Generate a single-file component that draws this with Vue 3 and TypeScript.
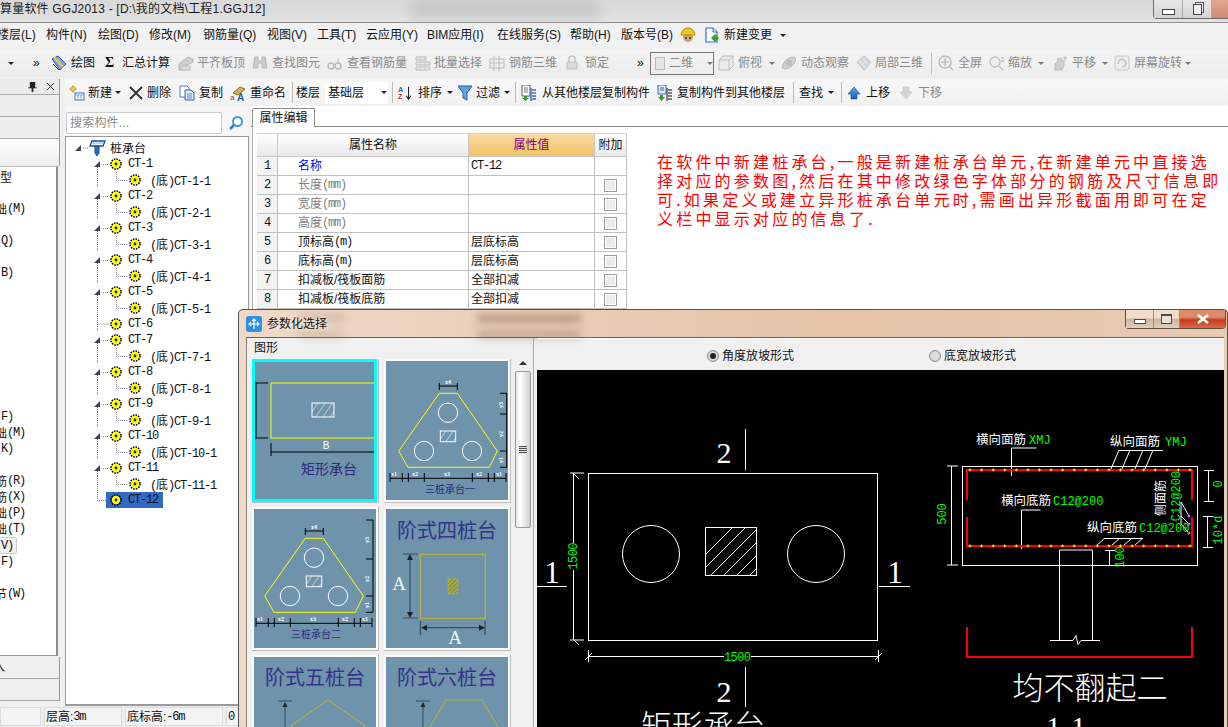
<script setup lang="ts">
type Cell = { x: number; k: string; v: string; g: boolean; w: number }
type Spec = [number, string, string?, number?]
const mk = (s: Spec[]): Cell[] =>
  s.map((c, i) => ({
    x: c[0], k: c[1], v: c[2] ?? '', g: !!c[3],
    w: (i + 1 < s.length ? s[i + 1][0] : c[0] + 60) - c[0],
  }))

const menu = mk([
  [-3, 't', '楼层(L)'], [46, 't', '构件(N)'], [98, 't', '绘图(D)'], [149, 't', '修改(M)'], [203, 't', '钢筋量(Q)'],
  [267, 't', '视图(V)'], [317, 't', '工具(T)'], [366, 't', '云应用(Y)'], [427, 't', 'BIM应用(I)'], [497, 't', '在线服务(S)'],
  [570, 't', '帮助(H)'], [621, 't', '版本号(B)'], [680, 'i', 'helmet'], [704, 'i', 'newdoc'], [724, 't', '新建变更'], [780, 'c'],
])
const bar1 = mk([
  [8, 'c'], [33, 't', '»'], [51, 'i', 'pencil'], [71, 't', '绘图'], [105, 'sum', 'Σ'], [122, 't', '汇总计算'],
  [178, 'i', 'align', 1], [197, 't', '平齐板顶', 1], [252, 'i', 'binoc', 1], [272, 't', '查找图元', 1],
  [327, 'i', 'glasses', 1], [347, 't', '查看钢筋量', 1], [415, 'i', 'batch', 1], [434, 't', '批量选择', 1],
  [489, 'i', 'rebar', 1], [509, 't', '钢筋三维', 1], [564, 'i', 'lock', 1], [585, 't', '锁定', 1], [637, 't', '»'],
  [652, 'combo', '二维'], [718, 'i', 'box', 1], [738, 't', '俯视', 1], [769, 'c', '', 1],
  [781, 'i', 'orbit', 1], [801, 't', '动态观察', 1], [856, 'i', 'local', 1], [875, 't', '局部三维', 1], [931, 's'],
  [938, 'i', 'zoomall', 1], [958, 't', '全屏', 1], [989, 'i', 'zoom', 1], [1008, 't', '缩放', 1], [1038, 'c', '', 1],
  [1052, 'i', 'pan', 1], [1072, 't', '平移', 1], [1102, 'c', '', 1], [1114, 'i', 'rotate', 1], [1134, 't', '屏幕旋转', 1], [1185, 'c', '', 1],
])
const bar2 = mk([
  [69, 'i', 'new'], [88, 't', '新建'], [115, 'c'], [128, 'i', 'del'], [147, 't', '删除'], [179, 'i', 'copy'], [199, 't', '复制'],
  [230, 'i', 'rename'], [250, 't', '重命名'], [292, 's'], [296, 't', '楼层'], [325, 'floor', '基础层'], [392, 's'],
  [397, 'i', 'sort'], [418, 't', '排序'], [447, 'c'], [457, 'i', 'filter'], [476, 't', '过滤'], [504, 'c'], [515, 's'],
  [521, 'i', 'copyfrom'], [542, 't', '从其他楼层复制构件'], [657, 'i', 'copyto'], [677, 't', '复制构件到其他楼层'], [793, 's'],
  [799, 't', '查找'], [828, 'c'], [841, 's'], [846, 'i', 'up'], [866, 't', '上移'], [898, 'i', 'down', 1], [918, 't', '下移', 1],
])

const sideRows: [string, string][] = [
  ['型', ''], ['', ''], ['础', '(M)'], ['', ''], ['', '(Q)'], ['', ''], ['', '(B)'], ['', ''], ['', ''], ['', ''], ['', ''], ['', ''], ['', ''], ['', ''], ['', ''],
  ['', '(F)'], ['础', '(M)'], ['', '(K)'], ['', ''], ['筋', '(R)'], ['筋', '(X)'], ['础', '(P)'], ['础', '(T)'], ['', '(V)'], ['', '(F)'], ['', ''], ['节', '(W)'],
]

type TreeRow = { k: 'root' | 'parent' | 'child' | 'last' | 'leaf'; t: string }
const tree: TreeRow[] = [{ k: 'root', t: '桩承台' }]
for (let i = 1; i <= 11; i++) {
  if (i === 6) { tree.push({ k: 'leaf', t: 'CT-6' }); continue }
  tree.push({ k: 'parent', t: `CT-${i}` })
  tree.push({ k: 'child', t: `CT-${i}-1` })
}
tree.push({ k: 'last', t: 'CT-12' })

const props: { n: string; u?: string; v?: string; c: string; a?: boolean }[] = [
  { n: '名称', v: 'CT-12', c: 'blue' },
  { n: '长度', u: '(mm)', c: 'gray', a: true },
  { n: '宽度', u: '(mm)', c: 'gray', a: true },
  { n: '高度', u: '(mm)', c: 'gray', a: true },
  { n: '顶标高', u: '(m)', v: '层底标高', c: '', a: true },
  { n: '底标高', u: '(m)', v: '层底标高', c: '', a: true },
  { n: '扣减板/筏板面筋', v: '全部扣减', c: '', a: true },
  { n: '扣减板/筏板底筋', v: '全部扣减', c: '', a: true },
  { n: '', c: '', a: false },
]

const dots = Array.from({ length: 20 }, (_, i) => 970 + i * 11.58)
const hatchLines = Array.from({ length: 7 }, (_, i) => -20 + i * 13)
const triLabels: [number, string][] = [[394, 'x1'], [415, 'x2'], [447, 'x3'], [479, 'x2'], [499, 'x1']]
const triTicks = [390, 402.3, 408.3, 424.3, 472.3, 488.3, 494.3, 506]
const tris = [
  { vb: '386 361 122 139', title: '三桩承台一' },
  { vb: '388 364 122 139', title: '三桩承台二' },
]
</script>

<template>
  <div class="app">
    <svg class="defs" aria-hidden="true">
      <defs>
        <pattern id="hatch" width="6" height="6" patternUnits="userSpaceOnUse" patternTransform="rotate(35)">
          <line x1="0" y1="0" x2="0" y2="6" stroke="#fff" stroke-width="1" />
        </pattern>
        <pattern id="hatchY" width="3" height="3" patternUnits="userSpaceOnUse" patternTransform="rotate(45)">
          <line x1="0" y1="0" x2="0" y2="3" stroke="#56603a" stroke-width="1" />
        </pattern>
        <linearGradient id="gBlue" x1="0" y1="0" x2="0" y2="1"><stop offset="0" stop-color="#5aa5e8" /><stop offset="1" stop-color="#1560b0" /></linearGradient>
      </defs>
      <symbol id="gear" viewBox="0 0 12 12">
        <circle cx="6" cy="6" r="5" fill="none" stroke="#000" stroke-width="1.6" stroke-dasharray="1.6 1" />
        <circle cx="6" cy="6" r="4.2" fill="#ff0" />
        <circle cx="6" cy="6" r="1.4" fill="#222" />
      </symbol>
      <symbol id="pile" viewBox="0 0 18 18">
        <path d="M4 2h13l-2 5H2z" fill="#fff" stroke="#1b4f9c" stroke-width="1.3" />
        <path d="M4 4h11" stroke="#7db0e8" />
        <path d="M7 7h4v7l-2 3-2-3z" fill="#2a6fc0" stroke="#1b4f9c" />
      </symbol>
      <symbol id="helmet" viewBox="0 0 16 16">
        <circle cx="8" cy="10" r="5" fill="#caa07c" />
        <path d="M1 8a7 7 0 0 1 14 0z" fill="#f2c51e" stroke="#b98e10" />
        <circle cx="6" cy="11" r="1" fill="#333" /><circle cx="10" cy="11" r="1" fill="#333" />
      </symbol>
      <symbol id="newdoc" viewBox="0 0 16 16">
        <path d="M2 1h7l4 4v10H2z" fill="#fff" stroke="#2c72c7" stroke-width="1.2" />
        <path d="M9 1v4h4" fill="#d8e8fa" stroke="#2c72c7" />
        <path d="M11 7l4 4-4 4-4-4z" fill="#35a435" />
      </symbol>
      <symbol id="pencil" viewBox="0 0 16 16">
        <path d="M1 4l6-3 8 8-6 6z" fill="#7ea6df" stroke="#2f5ca8" />
        <path d="M3 2l9 10" stroke="#f1c64a" stroke-width="2" />
        <path d="M2 9l6 6" stroke="#20408a" />
      </symbol>
      <symbol id="align" viewBox="0 0 16 16">
        <path d="M1 15V9l9-7 5 2v3l-8 4v4z" fill="#cfcfcf" stroke="#b3b3b3" /><path d="M3 11h9v4H3z" fill="#dcdcdc" stroke="#b9b9b9" />
      </symbol>
      <symbol id="binoc" viewBox="0 0 16 16">
        <path d="M3 2h3v4h4V2h3l2 11h-5V8H6v5H1z" fill="#cdcdcd" stroke="#b5b5b5" />
      </symbol>
      <symbol id="glasses" viewBox="0 0 16 16">
        <circle cx="4" cy="11" r="3" fill="none" stroke="#b5b5b5" stroke-width="1.3" /><circle cx="11" cy="11" r="3" fill="none" stroke="#b5b5b5" stroke-width="1.3" /><path d="M11 3v5M7 11h1" stroke="#c0c0c0" />
      </symbol>
      <symbol id="batch" viewBox="0 0 16 16">
        <path d="M1 2h10v3H1zM1 7h14v3H1zM1 12h14v3H1z" fill="#e8e8e8" stroke="#bbb" /><path d="M5 2v13M10 2v13" stroke="#ccc" />
      </symbol>
      <symbol id="rebar" viewBox="0 0 16 16">
        <path d="M1 4h14v9H1zM5 1v15M10 1v15M1 8h14" fill="none" stroke="#bdbdbd" />
      </symbol>
      <symbol id="lock" viewBox="0 0 16 16">
        <path d="M5 7V4a3 3 0 0 1 6 0v3" fill="none" stroke="#c2c2c2" stroke-width="1.5" /><rect x="3" y="7" width="10" height="7" rx="1" fill="#dcdcdc" stroke="#bcbcbc" />
      </symbol>
      <symbol id="box" viewBox="0 0 16 16">
        <path d="M1 5l4-4h10v10l-4 4H1zM1 5h10v10M11 5l4-4" fill="#ececec" stroke="#bcbcbc" />
      </symbol>
      <symbol id="orbit" viewBox="0 0 16 16">
        <ellipse cx="8" cy="8" rx="8" ry="4" transform="rotate(-40 8 8)" fill="#d0d0d0" stroke="#bdbdbd" /><circle cx="8" cy="8" r="3" fill="#bdbdbd" />
      </symbol>
      <symbol id="local" viewBox="0 0 16 16">
        <path d="M1 7l7-6 7 6-7 8z" fill="#e2e2e2" stroke="#bcbcbc" /><path d="M5 4l6 8M9 2l4 6M3 8l5 6" stroke="#c4c4c4" />
      </symbol>
      <symbol id="zoomall" viewBox="0 0 16 16">
        <circle cx="7" cy="7" r="6" fill="#eee" stroke="#bdbdbd" stroke-width="1.4" /><path d="M7 3v8M3 7h8M12 12l3 3" stroke="#b5b5b5" stroke-width="1.2" />
      </symbol>
      <symbol id="zoom" viewBox="0 0 16 16">
        <circle cx="6" cy="7" r="5" fill="#eee" stroke="#c2c2c2" stroke-width="1.4" /><path d="M10 11l4 4M12 3h3M12 6h3" stroke="#bdbdbd" stroke-width="1.3" />
      </symbol>
      <symbol id="pan" viewBox="0 0 16 16">
        <path d="M3 15V9l2-2 1-4 2 1 1-1 1 2 2 1v4l-2 5z" fill="#cfcfcf" stroke="#bdbdbd" /><path d="M13 1v5M11 3h4" stroke="#bdbdbd" />
      </symbol>
      <symbol id="rotate" viewBox="0 0 16 16">
        <rect x="1" y="1" width="14" height="14" rx="2" fill="#eee" stroke="#c6c6c6" /><path d="M4 9a4 4 0 1 1 7 2M11 11l-3 1" fill="none" stroke="#b8b8b8" stroke-width="1.3" />
      </symbol>
      <symbol id="new" viewBox="0 0 16 16">
        <path d="M3 1h2v2h2v2H5v2H3V5H1V3h2z" fill="#f4d24a" stroke="#ae8d18" stroke-width=".6" /><rect x="6" y="8" width="9" height="7" fill="#fff" stroke="#3a74bd" /><path d="M6 10h9M9 10v5M12 10v5" stroke="#7aa5da" />
      </symbol>
      <symbol id="del" viewBox="0 0 16 16">
        <path d="M2 2l12 12M14 2L2 14" stroke="#333" stroke-width="2" />
      </symbol>
      <symbol id="copy" viewBox="0 0 16 16">
        <path d="M1 1h7l2 2v9H1z" fill="#fff" stroke="#4c7bb8" /><path d="M6 5h6l3 3v7H6z" fill="#dbe8f7" stroke="#3566a8" /><path d="M8 9h5M8 11h5M8 13h5" stroke="#6b8fbf" />
      </symbol>
      <symbol id="rename" viewBox="0 0 16 16">
        <path d="M3 8l7-6 5 2-7 6z" fill="#d6b04d" stroke="#8f7420" /><text x="0" y="15" font-size="8" fill="#555" font-family="Liberation Sans">a</text><text x="7" y="16" font-size="10" font-weight="700" fill="#2c5fae" font-family="Liberation Sans">A</text>
      </symbol>
      <symbol id="sort" viewBox="0 0 18 16">
        <text x="1" y="7" font-size="8" font-weight="700" fill="#2b63b4" font-family="Liberation Sans">A</text><text x="1" y="15" font-size="8" font-weight="700" fill="#b03030" font-family="Liberation Sans">Z</text><path d="M13 1v13M10.500 11l2.500 4 2.500-4" fill="none" stroke="#222" stroke-width="1.2" />
      </symbol>
      <symbol id="filter" viewBox="0 0 16 16">
        <path d="M1 1h14L10 8v7l-4-2V8z" fill="#5ea3e6" stroke="#245ea8" />
      </symbol>
      <symbol id="copyfrom" viewBox="0 0 16 16">
        <path d="M1 0h8v11H1z" fill="#fff" stroke="#555" /><path d="M3 3h4M3 5h4M3 7h4" stroke="#777" /><path d="M3 11h3v2h2l-3.500 3L1 13h2z" fill="#2aa02a" /><path d="M11 5h4M11 8h4M11 11h4M11 14h4M10 3v13" stroke="#3a6db0" stroke-width="1.4" />
      </symbol>
      <symbol id="copyto" viewBox="0 0 16 16">
        <path d="M1 0h8v9H1z" fill="#dbe8f7" stroke="#3a6db0" /><path d="M3 3h4M3 5h4" stroke="#3a6db0" /><path d="M3 10h3v2h2l-3.500 4L1 12h2z" fill="#2aa02a" /><path d="M11 5h4M11 8h4M11 11h4M11 14h4M10 3v13" stroke="#555" stroke-width="1.4" />
      </symbol>
      <symbol id="up" viewBox="0 0 16 16">
        <path d="M8 2l6 7h-3v5H5V9H2z" fill="url(#gBlue)" stroke="#1c5199" stroke-width=".6" />
      </symbol>
      <symbol id="down" viewBox="0 0 16 16">
        <path d="M8 14l6-7h-3V2H5v5H2z" fill="#d4d4d4" stroke="#bdbdbd" stroke-width=".6" />
      </symbol>
    </svg>

    <header class="titlebar">
      <span class="title">算量软件 GGJ2013 - [D:\我的文档\工程1.GGJ12]</span>
      <span class="title-blur"></span>
      <div class="winbtns">
        <span class="wb"><i class="min"></i></span>
        <span class="wb"><i class="restore"></i></span>
        <span class="wb close"></span>
      </div>
    </header>

    <nav class="row menu">
      <template v-for="c in menu" :key="c.x">
        <span class="cell" :style="{ width: c.w + 'px' }">
          <svg v-if="c.k === 'i'" class="ic"><use :href="'#' + c.v" /></svg>
          <i v-else-if="c.k === 'c'" class="caret"></i>
          <template v-else>{{ c.v }}</template>
        </span>
      </template>
    </nav>

    <div class="row bar1">
      <span class="cell" v-for="c in bar1" :key="c.x" :class="{ gray: c.g }" :style="{ width: c.w + 'px' }">
        <svg v-if="c.k === 'i'" class="ic"><use :href="'#' + c.v" /></svg>
        <i v-else-if="c.k === 'c'" class="caret"></i>
        <i v-else-if="c.k === 's'" class="sep"></i>
        <b v-else-if="c.k === 'sum'" class="sum">{{ c.v }}</b>
        <span v-else-if="c.k === 'combo'" class="combo"><i class="swatch"></i>{{ c.v }}<i class="caret"></i></span>
        <template v-else>{{ c.v }}</template>
      </span>
    </div>

    <div class="main">
      <aside class="side">
        <div class="dock-head">
          <svg class="pin" viewBox="0 0 10 12"><path d="M2 1h6v6h2v1H6v4H4V8H0V7h2z" fill="#222" /></svg>
          <svg class="pin-x" viewBox="0 0 10 10"><path d="M1 1l8 8M9 1L1 9" stroke="#222" /></svg>
        </div>
        <div class="dock-tab"></div>
        <div class="dock-tab"></div>
        <div class="dock-grad"></div>
        <div class="side-list">
          <div v-for="(r, i) in sideRows" :key="i" class="side-row" :class="{ first: i === 0, hl: i === 23 }">
            <span class="cjk">{{ r[0] }}</span><span class="mono">{{ r[1] }}</span>
          </div>
        </div>
        <div class="dock-foot"><span>入</span></div>
        <div class="dock-foot"></div>
      </aside>

      <div class="work">
        <div class="row bar2">
          <span class="cell" v-for="c in bar2" :key="c.x" :class="{ gray: c.g }" :style="{ width: c.w + 'px' }">
            <svg v-if="c.k === 'i'" class="ic"><use :href="'#' + c.v" /></svg>
            <i v-else-if="c.k === 'c'" class="caret"></i>
            <i v-else-if="c.k === 's'" class="sep"></i>
            <span v-else-if="c.k === 'floor'" class="floor">{{ c.v }}<i class="caret"></i></span>
            <template v-else>{{ c.v }}</template>
          </span>
        </div>
        <div class="panes">
          <section class="treecol">
            <div class="searchrow">
              <div class="search">搜索构件...</div>
              <svg class="mag" viewBox="0 0 16 16"><circle cx="9.500" cy="6.500" r="4.500" fill="#fff" stroke="#3a9ae0" stroke-width="2" /><path d="M6 10l-4 4" stroke="#2c7fc4" stroke-width="2.500" /></svg>
            </div>
            <div class="tree">
              <div v-for="(r, i) in tree" :key="i" class="tr">
                <template v-if="r.k === 'root'">
                  <svg class="wire" width="44" height="16" viewBox="66 0 44 16">
                    <path d="M81 5v6h-6z" fill="#444" />
                    <path d="M83 8h5" fill="none" stroke="#777" stroke-dasharray="1 1" />
                    <use href="#pile" x="88" y="-1" width="18" height="18" />
                  </svg>
                  <span class="cjk">{{ r.t }}</span>
                </template>
                <template v-else-if="r.k === 'parent' || r.k === 'leaf'">
                  <svg class="wire" width="62" height="16" viewBox="66 0 62 16">
                    <path v-if="r.k === 'parent'" d="M100 5v6h-6z" fill="#444" />
                    <path v-if="r.k === 'parent'" d="M97.500 11v5" fill="none" stroke="#777" stroke-dasharray="1 1" />
                    <path v-else d="M97.500 0v16M97.500 8h12" fill="none" stroke="#777" stroke-dasharray="1 1" />
                    <path v-if="r.k === 'parent'" d="M103 8.500h6" fill="none" stroke="#777" stroke-dasharray="1 1" />
                    <use href="#gear" x="110" y="2" width="12" height="12" />
                  </svg>
                  <span class="mono">{{ r.t }}</span>
                </template>
                <template v-else-if="r.k === 'child'">
                  <svg class="wire" width="84" height="16" viewBox="66 0 84 16">
                    <path d="M97.500 0v16M116.500 0v8.500h11" fill="none" stroke="#777" stroke-dasharray="1 1" />
                    <use href="#gear" x="129" y="2" width="12" height="12" />
                  </svg>
                  <span class="mono">(<em>底</em>){{ r.t }}</span>
                </template>
                <template v-else>
                  <svg class="wire" width="40" height="16" viewBox="66 0 40 16">
                    <path d="M97.500 0v8.500h9" fill="none" stroke="#777" stroke-dasharray="1 1" />
                  </svg>
                  <span class="sel">
                    <svg class="wire" width="22" height="16" viewBox="106 0 22 16"><use href="#gear" x="110" y="2" width="12" height="12" /></svg>
                    <span class="mono">{{ r.t }}</span>
                  </span>
                </template>
              </div>
            </div>
          </section>

          <section class="props">
            <div class="tabstrip"><span class="tab">属性编辑</span></div>
            <div class="tabbody">
              <div class="table">
                <div class="tr-h">
                  <span></span><span>属性名称</span><span class="active">属性值</span><span>附加</span>
                </div>
                <div v-for="(p, i) in props" :key="i" class="tr-b">
                  <span class="num mono">{{ i + 1 }}</span>
                  <span class="name" :class="p.c">{{ p.n }}<span v-if="p.u" class="mono unit">{{ p.u }}</span></span>
                  <span class="val" :class="{ mono: p.v === 'CT-12' }">{{ p.v }}</span>
                  <span class="chk"><i v-if="p.a"></i></span>
                </div>
              </div>
              <p class="note">在软件中新建桩承台,一般是新建桩承台单元,在新建单元中直接选<br />择对应的参数图,然后在其中修改绿色字体部分的钢筋及尺寸信息即<br />可.如果定义或建立异形桩承台单元时,需画出异形截面用即可在定<br />义栏中显示对应的信息了.</p>
            </div>
          </section>
        </div>
      </div>
    </div>

    <footer class="status">
      <span class="st s0"></span>
      <span class="st s1">层高:<span class="mono">3m</span></span>
      <span class="st s2">底标高:<span class="mono">-6m</span></span>
      <span class="st s3 mono">0</span>
    </footer>

    <section class="dialog">
      <div class="dlg-title">
        <i class="blot b1"></i><i class="blot b2"></i><i class="blot b3"></i><i class="blot b4"></i>
        <svg class="dlg-icon" viewBox="0 0 16 16"><rect width="16" height="16" rx="3" fill="#2a8fe6" /><path d="M8 3v10M3 8h10M5 6L3 8l2 2M11 6l2 2-2 2M6 5l2-2 2 2" fill="none" stroke="#fff" stroke-width="1.200" /></svg>
        <span class="dlg-name">参数化选择</span>
        <div class="dlg-btns">
          <span class="db"><i class="dmin"></i></span>
          <span class="db"><i class="dmax"></i></span>
          <span class="db dclose"><svg viewBox="0 0 14 10" width="14" height="10"><path d="M2 1l10 8M12 1L2 9" stroke="#fff" stroke-width="2.600" /></svg></span>
        </div>
      </div>
      <div class="dlg-body">
        <div class="gal-pane">
          <div class="grp-label">图形</div>
          <div class="gal-wrap">
            <div class="gallery">
              <div class="thumb selected">
                <svg viewBox="253 359 125 143" width="125" height="143">
                  <rect x="253" y="359" width="125" height="143" fill="#6f93aa" />
                  <path d="M378 383H272v55h106" fill="none" stroke="#ffff00" />
                  <rect x="313" y="403" width="22" height="14" fill="url(#hatch)" stroke="#fff" />
                  <path d="M257 383v55M255 383h14M255 438h14M272 443v13M272 452h106" stroke="#000" fill="none" />
                  <text x="327" y="449" class="tb" font-size="10" fill="#fff" text-anchor="middle">B</text>
                  <text x="330" y="474" class="tc" font-size="14" fill="#2c2c7c" text-anchor="middle">矩形承台</text>
                  <rect x="254.500" y="360.500" width="122" height="140" fill="none" stroke="#00ffff" stroke-width="3" />
                </svg>
              </div>
              <div class="thumb" v-if="tris[0]">
                <svg :viewBox="tris[0].vb" width="122" height="139">
                  <rect x="380" y="355" width="140" height="150" fill="#6f93aa" />
                  <path d="M439.300 393.300h18L497.300 451l-8 16.300H408l-9.300-16.300z" fill="none" stroke="#ffff00" />
                  <circle cx="448" cy="412.700" r="9.700" fill="none" stroke="#fff" />
                  <circle cx="424" cy="451" r="9.700" fill="none" stroke="#fff" />
                  <circle cx="472" cy="451" r="9.700" fill="none" stroke="#fff" />
                  <rect x="440.300" y="431" width="15.400" height="10.700" fill="url(#hatch)" stroke="#fff" />
                  <path d="M439.300 386h18M439.300 383v7M457.300 383v7M506.700 393.300v74M500 393.300h7M500 414h7M500 451h7M500 467.300h7M390 478.300h116" stroke="#000" fill="none" />
                  <path v-for="t in triTicks" :key="t" :d="`M${t} 473v9`" stroke="#000" />
                  <text x="448" y="384" class="tiny" text-anchor="middle">x4</text>
                  <text v-for="(l, i) in triLabels" :key="i" :x="l[0]" :y="476" class="tiny" text-anchor="middle">{{ l[1] }}</text>
                  <text class="tiny" text-anchor="middle" transform="translate(503 405) rotate(-90)">y3</text>
                  <text class="tiny" text-anchor="middle" transform="translate(503 434) rotate(-90)">y2</text>
                  <text class="tiny" text-anchor="middle" transform="translate(503 460) rotate(-90)">y1</text>
                  <text x="450" y="493" class="tc" font-size="10" fill="#2c2c7c" text-anchor="middle">{{ tris[0].title }}</text>
                </svg>
              </div>
              <div class="thumb">
                <svg :viewBox="tris[1].vb" width="122" height="139">
                  <rect x="380" y="355" width="140" height="150" fill="#6f93aa" />
                  <path d="M439.300 393.300h18L497.300 451l-8 16.300H408l-9.300-16.300z" fill="none" stroke="#ffff00" />
                  <circle cx="448" cy="412.700" r="9.700" fill="none" stroke="#fff" />
                  <circle cx="424" cy="451" r="9.700" fill="none" stroke="#fff" />
                  <circle cx="472" cy="451" r="9.700" fill="none" stroke="#fff" />
                  <rect x="440.300" y="431" width="15.400" height="10.700" fill="url(#hatch)" stroke="#fff" />
                  <path d="M439.300 386h18M439.300 383v7M457.300 383v7M507 375v92M500 375h7M500 414h7M500 451h7M500 467.300h7M390 478.300h116" stroke="#000" fill="none" />
                  <path v-for="t in triTicks" :key="t" :d="`M${t} 473v9`" stroke="#000" />
                  <text x="448" y="384" class="tiny" text-anchor="middle">x4</text>
                  <text v-for="(l, i) in triLabels" :key="i" :x="l[0]" :y="476" class="tiny" text-anchor="middle">{{ l[1] }}</text>
                  <text class="tiny" text-anchor="middle" transform="translate(503 395) rotate(-90)">y3</text>
                  <text class="tiny" text-anchor="middle" transform="translate(503 434) rotate(-90)">y2</text>
                  <text class="tiny" text-anchor="middle" transform="translate(503 460) rotate(-90)">y1</text>
                  <text x="450" y="493" class="tc" font-size="10" fill="#2c2c7c" text-anchor="middle">{{ tris[1].title }}</text>
                </svg>
              </div>
              <div class="thumb">
                <svg viewBox="386 509 122 139" width="122" height="139">
                  <rect x="386" y="509" width="122" height="139" fill="#6f93aa" />
                  <text x="447" y="538" class="tc" font-size="20" fill="#34348a" text-anchor="middle">阶式四桩台</text>
                  <rect x="420.300" y="554.300" width="65" height="64" fill="none" stroke="#b5b53a" stroke-width="1.200" />
                  <rect x="448.300" y="579" width="9.400" height="14.700" fill="#a9a94c" stroke="#b5b53a" />
                  <rect x="448.300" y="579" width="9.400" height="14.700" fill="url(#hatchY)" />
                  <path d="M403 554h15M403 618h15M410 558v56M420.300 621v14M485 621v14M424 627.700h58" stroke="#35505f" stroke-width="1.200" fill="none" />
                  <path d="M410 554l-3 6h6zM410 618l-3-6h6zM421 627.700l6-3v6zM485 627.700l-6-3v6z" fill="#222" />
                  <text x="399" y="590" class="ts" font-size="19" fill="#eef2f4" text-anchor="middle">A</text>
                  <text x="455" y="644" class="ts" font-size="19" fill="#eef2f4" text-anchor="middle">A</text>
                </svg>
              </div>
              <div class="thumb">
                <svg viewBox="255 657 122 139" width="122" height="139">
                  <rect x="255" y="657" width="122" height="139" fill="#6f93aa" />
                  <text x="316" y="685" class="tc" font-size="20" fill="#34348a" text-anchor="middle">阶式五桩台</text>
                  <path d="M293 725l36-25 36 25v40H293z" fill="none" stroke="#b5b53a" />
                  <path d="M279 701h14M286 703v40" stroke="#35505f" /><path d="M286 702l-2.500 5h5z" fill="#222" />
                </svg>
              </div>
              <div class="thumb">
                <svg viewBox="386 657 122 139" width="122" height="139">
                  <rect x="386" y="657" width="122" height="139" fill="#6f93aa" />
                  <text x="447" y="685" class="tc" font-size="20" fill="#34348a" text-anchor="middle">阶式六桩台</text>
                  <path d="M446 700h36l16 27v40H430v-40z" fill="none" stroke="#b5b53a" />
                  <path d="M416 701h14M423 703v40" stroke="#35505f" /><path d="M423 702l-2.500 5h5z" fill="#222" />
                </svg>
              </div>
            </div>
            <div class="vscroll">
              <i class="up-arrow"></i>
              <div class="vthumb"><i></i></div>
            </div>
          </div>
        </div>
        <div class="cad-pane">
          <div class="radios">
            <label class="radio"><i class="r on"></i>角度放坡形式</label>
            <label class="radio"><i class="r"></i>底宽放坡形式</label>
          </div>
          <svg class="cad" viewBox="537 370 687 357" width="687" height="357">
            <clipPath id="hclip"><rect x="705" y="527" width="52" height="48" /></clipPath>
            <g fill="none" stroke="#fff">
              <rect x="588.500" y="473.500" width="289" height="167" />
              <circle cx="651" cy="554" r="28.500" />
              <circle cx="816" cy="554" r="28.500" />
              <rect x="705.500" y="527.500" width="51" height="48" />
              <g clip-path="url(#hclip)"><line v-for="h in hatchLines" :key="h" :x1="705 + h" y1="575" :x2="705 + h + 48" y2="527" /></g>
              <path d="M745.500 429v41M745.500 667v40M537 586.500h30M879 586.500h31" />
              <path d="M573.500 473v70M573.500 570v70M570 473h14M570 640h14M579 479l-6-6M579 645l-6-6" />
              <path d="M588 656.500h136M751 656.500h127M588.500 650v12M878.500 650v12M585 660l7-7M875 660l7-7" />
              <rect x="962.500" y="466.500" width="235" height="99" />
              <path d="M951.500 466v99M947 466h11M947 565h11" />
              <path d="M1059.500 565v-15h33v90M1059.500 565v75M1050 640.500h23l3-5 2 9 3-4h19" />
              <path d="M1208.500 470v31M1204 470.500h10M1204 501.500h10M1207.500 516v31M1203 516.500h10M1203 547.500h10" />
              <path d="M1109.500 550v15M1105 550.500h10" />
              <path d="M1011.500 476v-28h25M1021.500 549v-39h19" />
              <path d="M1119 450.500h44M1119 450l-8 19M1130 450l-8 19M1143 450l-8 19M1153 450l-8 19" />
              <path d="M1105 538.500h38M1105 538l-8 7M1120 538l-8 7M1132 538l-8 7M1143 538l-8 7" />
              <path d="M1181 502l8 14M1181 502v14l8 8M1181 516v8l8 9" />
            </g>
            <g stroke="#ff0000" stroke-width="2" fill="none">
              <path d="M967 500v-30h225v30M967 517v29h225v-29" />
              <path d="M967 627v30h225v-30" />
            </g>
            <g fill="none">
              <path v-for="d in dots" :key="d" :d="`M${d - 1.5} 470h3M${d} 468.500v3M${d - 1.5} 546h3M${d} 544.500v3`" stroke="#ffff00" />
            </g>
            <g fill="#ff40ff"><circle cx="1189" cy="516" r="1.500" /><circle cx="1189" cy="524" r="1.500" /><circle cx="1189" cy="533" r="1.500" /></g>

            <g class="ts" fill="#fff" font-size="30" text-anchor="middle">
              <text x="724" y="463">2</text><text x="724" y="702">2</text>
              <text x="552" y="583" font-size="31">1</text><text x="895" y="583" font-size="31">1</text>
              <text x="1066" y="737">1-1</text>
            </g>
            <g class="tc" fill="#fff" font-size="31" text-anchor="middle">
              <text x="703" y="737" font-weight="300">矩形承台</text>
              <text x="1090" y="699" font-weight="300">均不翻起二</text>
            </g>
            <g class="tc" fill="#fff" font-size="12.500">
              <text x="976" y="444">横向面筋</text><text x="1110" y="446">纵向面筋</text>
              <text x="1001" y="505">横向底筋</text><text x="1087" y="532">纵向底筋</text>
              <text text-anchor="middle" transform="translate(1165 498) rotate(-90)" font-size="12">侧面筋</text>
            </g>
            <g class="tm" fill="#00ff00" font-size="12">
              <text x="737.500" y="661" text-anchor="middle" textLength="27">1500</text>
              <text text-anchor="middle" transform="translate(577 556) rotate(-90)" textLength="27">1500</text>
              <text x="1029" y="444">XMJ</text><text x="1165" y="446">YMJ</text>
              <text x="1053" y="505">C12@200</text><text x="1139" y="532">C12@200</text>
              <text text-anchor="middle" transform="translate(1180 496) rotate(-90)">C12@200</text>
              <text text-anchor="middle" transform="translate(946 514) rotate(-90)">500</text>
              <text text-anchor="middle" transform="translate(1222 484) rotate(-90)">0</text>
              <text text-anchor="middle" transform="translate(1222 530) rotate(-90)">10*d</text>
              <text text-anchor="middle" transform="translate(1124 557) rotate(-90)">100</text>
            </g>
          </svg>
        </div>
      </div>
    </section>
  </div>
</template>

<style>
html, body { margin: 0; padding: 0; overflow: hidden; background: #f0f0f0; }
</style>

<style scoped>
.app { position: relative; width: 1228px; height: 727px; overflow: hidden; background: #f0f0f0; display: flex; flex-direction: column; font: 12px/16px "Liberation Sans", "Noto Sans CJK SC", sans-serif; color: #111; }
.defs { position: absolute; width: 0; height: 0; }
.cjk { font-family: "Noto Sans CJK SC", sans-serif; font-size: 12px; }
.mono { font-family: "Liberation Mono", "Noto Sans CJK SC", monospace; font-size: 12px; letter-spacing: -1.2px; }
.mono em { font: normal 12px "Noto Sans CJK SC", sans-serif; letter-spacing: 0; }
.row { display: flex; align-items: center; white-space: nowrap; }
.cell { flex: none; display: flex; align-items: center; height: 100%; white-space: nowrap; }
.gray { color: #8a8a8a; }
.ic { width: 16px; height: 16px; flex: none; }
.sep { display: block; width: 1px; height: 21px; background: #bdbdbd; }
.caret { display: block; width: 0; height: 0; border: 3px solid transparent; border-top: 3px solid #222; border-bottom: 0; margin-left: 0; }
.gray .caret { border-top-color: #777; }
.sum { font: 700 14px "Liberation Serif", serif; }

.titlebar { height: 22px; flex: none; display: flex; align-items: center; position: relative; background: linear-gradient(#d8d9d9, #e1e1e1); border-bottom: 1px solid #8d8d8d; }
.title { font-size: 12px; margin-top: -5px; color: #1a1a1a; letter-spacing: .2px; position: relative; z-index: 1; }
.title-blur { position: absolute; left: 410px; top: 1px; width: 190px; height: 16px; background: #bfc1c2; filter: blur(6px); opacity: .8; }
.winbtns { position: absolute; right: 0; top: 0; height: 18px; display: flex; border: 1px solid #6d6d6d; border-top: 0; border-right: 0; border-radius: 0 0 0 4px; margin-left: auto; }
.wb { width: 28px; height: 18px; display: flex; align-items: center; justify-content: center; background: linear-gradient(#e8e8e8, #d2d2d2); border-right: 1px solid #aaa; }
.wb.close { width: 16px; background: linear-gradient(#e2a890, #d08a70); border: 0; }
.min { display: block; width: 11px; height: 4px; border: 1px solid #444; background: #fff; margin-top: 5px; }
.restore { display: block; width: 7px; height: 9px; border: 1px solid #444; background: #eee; box-shadow: 2px -2px 0 -1px #eee, 2px -2px 0 0 #555; }

.menu { height: 24px; flex: none; background: #f1f1f1; margin-left: -3px; }
.bar1 { height: 28px; flex: none; background: linear-gradient(#f4f4f4, #ececec); margin: 2px 0; padding-left: 8px; }
.combo { display: flex; align-items: center; width: 60px; height: 21px; border: 1px solid #777; color: #8a8a8a; gap: 4px; box-sizing: content-box; padding-left: 2px; margin-left: -2px; }
.swatch { display: block; width: 14px; height: 11px; background: #e5e5e5; border: 1px solid #bbb; margin-left: 2px; }
.combo .caret { margin-left: 10px; border-top-color: #777; }

.main { flex: 1; display: flex; min-height: 0; }
.side { width: 65px; flex: none; display: flex; flex-direction: column; }
.dock-head { height: 15px; width: 59px; display: flex; align-items: center; position: relative; background: #ebebeb; border-bottom: 1px solid #aaa; border-right: 1px solid #999; }
.pin { width: 9px; height: 11px; margin-left: 28px; }
.pin-x { width: 9px; height: 9px; margin-left: 9px; }
.dock-tab { height: 21px; width: 59px; background: #eee; border-bottom: 1px solid #aaa; border-right: 1px solid #999; }
.dock-grad { height: 27px; width: 59px; background: linear-gradient(#fff, #ededed); border-right: 1px solid #999; }
.side-list { width: 58px; height: 490px; padding-top: 2px; background: #fff; border-right: 2px solid #8c8c8c; border-bottom: 1px solid #999; border-top: 1px solid #bbb; box-sizing: border-box; overflow: hidden; margin-bottom: 1px; }
.side-row { height: 16px; display: flex; align-items: center; margin-left: -5px; white-space: nowrap; }
.side-row.first { margin-left: 0; }
.side-row.hl { width: 21px; background: #f0f0f0; border: 1px solid #ccc; border-left: 0; border-radius: 0 2px 2px 0; height: 15px; }
.dock-foot { height: 21px; width: 59px; background: #efefef; border-bottom: 1px solid #aaa; border-right: 1px solid #999; overflow: hidden; }
.dock-foot span { margin-left: -7px; display: block; line-height: 20px; }

.work { flex: 1; min-width: 0; display: flex; flex-direction: column; }
.bar2 { height: 27px; flex: none; background: linear-gradient(#f8f8f8, #f1f1f1); padding-left: 4px; }
.floor { display: flex; align-items: center; width: 60px; height: 22px; background: #fff; padding-left: 3px; box-sizing: content-box; }
.floor .caret { margin-left: 17px; }
.panes { flex: 1; display: flex; min-height: 0; }
.treecol { width: 184px; flex: none; display: flex; flex-direction: column; background: #f6f6f6; }
.searchrow { height: 30px; flex: none; display: flex; align-items: center; padding-top: 3px; box-sizing: border-box; }
.search { width: 156px; height: 22px; margin-left: 1px; padding-left: 3px; box-sizing: border-box; border: 1px solid #ccc; border-radius: 2px; background: #fff; color: #8c8c8c; line-height: 20px; letter-spacing: .2px; }
.mag { width: 16px; height: 16px; margin-left: 6px; }
.tree { flex: 1; background: #fff; border: 1px solid #9a9a9a; border-width: 1px 1px 2px 1px; padding-top: 3px; }
.tr { height: 16px; display: flex; align-items: center; white-space: nowrap; }
.wire { flex: none; display: block; overflow: visible; }
.sel { display: flex; align-items: center; width: 57px; height: 16px; background: #316ac5; }

.props { flex: 1; min-width: 0; background: #fff; margin-left: 2px; display: flex; flex-direction: column; }
.tabstrip { height: 20px; flex: none; border-bottom: 1px solid #8e8e8e; display: flex; align-items: flex-end; padding-left: 1px; background: #fff; }
.tab { width: 63px; height: 19px; box-sizing: border-box; border: 1px solid #8e8e8e; border-bottom: 0; background: #fff; text-align: center; line-height: 19px; margin-bottom: -1px; border-radius: 2px 2px 0 0; }
.tabbody { flex: 1; display: flex; padding: 6px 0 0 4px; align-items: flex-start; border-left: 1px solid #aaa; margin-left: 1px; }
.table { width: 370px; flex: none; border-top: 1px solid #d6d6d6; }
.tr-h, .tr-b { display: grid; grid-template-columns: 21px 191px 126px 32px; }
.tr-h { height: 23px; }
.tr-h span { display: flex; align-items: center; justify-content: center; background: linear-gradient(#fff, #e9e9e9); border-right: 1px solid #c8c8c8; border-bottom: 1px solid #c8c8c8; }
.tr-h .active { background: linear-gradient(#f9dba2, #f2c265); color: #800080; }
.tr-b { height: 19px; }
.tr-b > span { display: flex; align-items: center; border-right: 1px solid #c0c0c0; border-bottom: 1px solid #c0c0c0; box-sizing: border-box; }
.tr-b .num { background: #f3f3f3; justify-content: center; }
.name { padding-left: 20px; }
.val { padding-left: 2px; }
.blue { color: #0000ff; }
.name.gray { color: #808080; }
.chk { justify-content: center; }
.chk i { display: block; width: 11px; height: 11px; border: 1px solid #9c9c9c; background: #ececec; box-shadow: inset 0 0 0 1px #fff; }
.note { margin: 19px 0 0 30px; font: 16px/19px "Noto Sans CJK SC", sans-serif; letter-spacing: 3.2px; color: #ff0000; white-space: nowrap; }

.status { height: 21px; flex: none; display: flex; gap: 3px; background: #ededed; font-size: 12px; padding-top: 1px; box-sizing: border-box; }
.st { display: flex; align-items: center; border: 1px solid #dcdcdc; box-sizing: border-box; height: 19px; background: #f3f3f3; white-space: nowrap; padding-left: 1px; }
.s0 { width: 41px; }
.s1 { width: 78px; }
.s2 { width: 98px; }
.s3 { width: 15px; }

.dialog { position: absolute; left: 238px; top: 309px; width: 990px; height: 418px; box-sizing: border-box; border: 1px solid #55504c; border-bottom: 0; border-radius: 5px 5px 0 0; display: flex; flex-direction: column; background: linear-gradient(90deg, #efd9c7, #e5c4a9 60%, #e8cbb3); overflow: hidden; }
.dlg-title { height: 27px; flex: none; display: flex; align-items: center; position: relative; padding-left: 7px; }
.blot { position: absolute; background: #7b5a44; filter: blur(4px); opacity: .55; }
.b1 { left: 238px; top: 5px; width: 104px; height: 7px; }
.b2 { left: 238px; top: 22px; width: 104px; height: 5px; }
.b3 { left: 60px; top: 5px; width: 46px; height: 6px; opacity: .3; }
.b4 { left: 60px; top: 22px; width: 46px; height: 5px; opacity: .3; }
.dlg-icon { width: 16px; height: 16px; position: relative; }
.dlg-name { margin-left: 5px; position: relative; text-shadow: 0 0 4px #fff; color: #111; }
.dlg-btns { position: absolute; right: 1px; top: 0; height: 18px; display: flex; border: 1px solid #5c4f45; border-top: 0; border-radius: 0 0 4px 4px; }
.db { width: 27px; height: 18px; display: flex; align-items: center; justify-content: center; background: linear-gradient(#efdccb 45%, #cdb6a2 50%, #e2cdb9); border-right: 1px solid #9d8b7d; }
.db:nth-child(2) { width: 25px; }
.dclose { width: 45px; border: 0; background: linear-gradient(#e08a6c 40%, #c63b1d 55%, #d96a46); }
.dmin { display: block; width: 10px; height: 3px; border: 1px solid #4a4a4a; background: #fff; margin-top: 4px; }
.dmax { display: block; width: 9px; height: 7px; border: 1px solid #4a4a4a; border-top-width: 2px; background: #eadfd5; }
.dlg-body { flex: 1; min-height: 0; margin-left: 7px; margin-right: 3px; border-top: 1px solid #6b5e55; border-left: 1px solid #8d8178; display: flex; background: #f0f0f0; }
.gal-pane { width: 287px; flex: none; position: relative; display: flex; flex-direction: column; border-right: 1px solid #a8a8a8; box-sizing: border-box; }
.grp-label { height: 20px; flex: none; padding: 2px 0 0 7px; box-sizing: border-box; line-height: 17px; position: relative; }
.gal-wrap { flex: 1; min-height: 0; display: flex; margin-left: 5px; overflow: hidden; }
.gallery { width: 262px; display: grid; grid-template-columns: 127px 127px; grid-auto-rows: 144px; gap: 4px 5px; align-content: start; padding-top: 1px; margin-left: 0; flex: none; }
.thumb { background: #fafafa; border-bottom: 1px solid #bdbdbd; border-right: 1px solid #bdbdbd; display: flex; align-items: center; justify-content: center; overflow: hidden; box-sizing: border-box; }
.thumb.selected { justify-content: flex-start; }
.thumb svg { display: block; flex: none; }
.tc { font-family: "Noto Sans CJK SC", sans-serif; }
.tb { font-family: "Liberation Sans", sans-serif; }
.ts { font-family: "Liberation Serif", serif; }
.tm { font-family: "Liberation Mono", monospace; }
.tiny { font: 700 6px "Liberation Serif", serif; fill: #fff; }
.vscroll { width: 16px; margin-left: 1px; flex: none; display: flex; flex-direction: column; align-items: center; background: #f0f0f0; }
.up-arrow { display: block; width: 0; height: 0; border: 4px solid transparent; border-bottom: 4px solid #333; border-top: 0; margin: 3px 0 6px; }
.vthumb { width: 14px; height: 155px; border: 1px solid #999; border-radius: 2px; background: linear-gradient(90deg, #e8e8e8, #fff 30%, #d0d0d0); display: flex; align-items: center; justify-content: center; }
.vthumb i { display: block; width: 8px; height: 8px; background: repeating-linear-gradient(#555 0 1px, #ddd 1px 2px); }
.cad-pane { flex: 1; min-width: 0; display: flex; flex-direction: column; margin-left: 3px; }
.radios { height: 32px; flex: none; position: relative; display: flex; align-items: center; padding: 3px 0 0 170px; gap: 135px; border-top: 1px solid #fff; box-sizing: border-box; }
.radio { display: flex; align-items: center; gap: 3px; }
.r { display: flex; width: 10px; height: 10px; border-radius: 50%; border: 1px solid #8a8a8a; background: radial-gradient(#e4e4e4, #cfcfcf); align-items: center; justify-content: center; box-sizing: content-box; }
.r.on::after { content: ""; width: 6px; height: 6px; border-radius: 50%; background: #222; }
.cad { display: block; background: #000; flex: none; }
</style>
